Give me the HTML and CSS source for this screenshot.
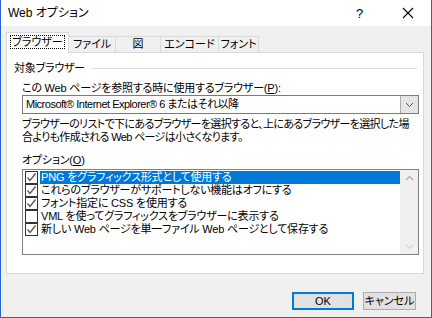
FILE: index.html
```html
<!DOCTYPE html>
<html lang="ja">
<head>
    <meta charset="UTF-8">
    <title>Web オプション</title>
    <link rel="stylesheet" href="styles.css">
</head>
<body>
    <div class="dialog">
        <div class="titlebar">
            <span class="title">Web オプション</span>
            <span class="help">?</span>
            <span class="close">
                <svg width="12" height="12" viewBox="0 0 12 12"><path d="M1 1 L11 11 M11 1 L1 11" stroke="#000" stroke-width="1.1" fill="none"/></svg>
            </span>
        </div>

        <div class="tabs">
            <div class="tab active"><span class="focus">ブラウザー</span></div>
            <div class="tab t2">ファイル</div>
            <div class="tab t3">図</div>
            <div class="tab t4">エンコード</div>
            <div class="tab t5">フォント</div>
        </div>

        <div class="panel">
            <div class="group-title">
                <span>対象ブラウザー</span>
                <div class="group-line"></div>
            </div>

            <div class="section">
                <div class="label">この Web ページを参照する時に使用するブラウザー(<u>P</u>):</div>
                <div class="combo">
                    <span class="combo-text">Microsoft® Internet Explorer® 6 またはそれ以降</span>
                    <span class="combo-btn">
                        <svg width="9" height="6" viewBox="0 0 9 6"><path d="M1 1 L4.5 4.5 L8 1" stroke="#555" stroke-width="1" fill="none"/></svg>
                    </span>
                </div>
                <div class="desc">
                    <div>ブラウザーのリストで下にあるブラウザーを選択すると、上にあるブラウザーを選択した場</div>
                    <div>合よりも作成される Web ページは小さくなります。</div>
                </div>

                <div class="label options-label">オプション(<u>O</u>)</div>
                <div class="listbox">
                    <div class="items">
                        <div class="item selected">
                            <span class="check on"></span>
                            <span class="item-text">PNG をグラフィックス形式として使用する</span>
                        </div>
                        <div class="item">
                            <span class="check on"></span>
                            <span class="item-text">これらのブラウザーがサポートしない機能はオフにする</span>
                        </div>
                        <div class="item">
                            <span class="check on"></span>
                            <span class="item-text">フォント指定に CSS を使用する</span>
                        </div>
                        <div class="item">
                            <span class="check"></span>
                            <span class="item-text">VML を使ってグラフィックスをブラウザーに表示する</span>
                        </div>
                        <div class="item">
                            <span class="check on"></span>
                            <span class="item-text">新しい Web ページを単一ファイル Web ページとして保存する</span>
                        </div>
                    </div>
                    <div class="scrollbar">
                        <svg width="9" height="6" viewBox="0 0 9 6"><path d="M1 5 L4.5 1.5 L8 5" stroke="#a8a8a8" stroke-width="1.2" fill="none"/></svg>
                        <svg width="9" height="6" viewBox="0 0 9 6"><path d="M1 1 L4.5 4.5 L8 1" stroke="#d4d4d4" stroke-width="1.2" fill="none"/></svg>
                    </div>
                </div>
            </div>
        </div>

        <div class="buttons">
            <button class="btn default">OK</button>
            <button class="btn">キャンセル</button>
        </div>
    </div>
</body>
</html>
```

FILE: styles.css
```css
* {
    box-sizing: border-box;
    margin: 0;
    padding: 0;
}

body {
    font-family: 'Liberation Sans', 'Noto Sans CJK JP', sans-serif;
    font-size: 12px;
    line-height: 13px;
    color: #000;
    background: #f0f0f0;
}

.dialog {
    width: 432px;
    height: 318px;
    background: #f0f0f0;
    border: 1px solid #2a64d0;
    border-top: none;
    overflow: hidden;
}

.titlebar {
    height: 26px;
    background: #fff;
    display: flex;
    align-items: center;
    padding-left: 7px;
}

.title {
    flex-grow: 1;
    font-size: 12px;
    font-feature-settings: "palt";
}

.help {
    width: 46px;
    font-size: 13px;
}

.close {
    width: 29px;
    display: flex;
}

.tabs {
    display: flex;
    align-items: flex-end;
    height: 20px;
    margin-top: 6px;
    padding-left: 5px;
}

.tab {
    height: 16px;
    border: 1px solid #d9d9d9;
    border-bottom: none;
    background: #f0f0f0;
    margin-left: -1px;
    display: flex;
    align-items: center;
    justify-content: center;
    font-feature-settings: "palt";
    font-size: 11px;
}

.tab.active {
    margin-left: 0;
    width: 63px;
    height: 21px;
    margin-bottom: -1px;
    background: #fff;
    position: relative;
    z-index: 1;
    padding-bottom: 2px;
}

.focus {
    border: 1px dotted #000;
    padding: 0 1px;
    line-height: 12px;
}

.t2 { width: 48px; }
.t3 { width: 46px; }
.t4 { width: 59px; }
.t5 { width: 41px; }

.panel {
    margin-left: 5px;
    width: 418px;
    height: 222px;
    background: #fff;
    border: 1px solid #d9d9d9;
    padding: 9px 4px 0 7px;
    font-feature-settings: "palt";
    font-size: 11px;
    letter-spacing: -0.2px;
}

.group-title {
    display: flex;
    align-items: center;
    gap: 6px;
    padding-right: 2px;
}

.group-line {
    flex-grow: 1;
    height: 1px;
    background: #dcdcdc;
}

.section {
    padding-left: 8px;
}

.label {
    margin-top: 7px;
}

.combo {
    height: 19px;
    border: 1px solid #7a7a7a;
    display: flex;
    align-items: center;
    justify-content: space-between;
    padding-left: 3px;
}

.combo-text {
    letter-spacing: -0.5px;
}

.combo-btn {
    width: 18px;
    height: 17px;
    background: #e5e5e5;
    border-left: 1px solid #acacac;
    display: flex;
    align-items: center;
    justify-content: center;
}

.desc {
    margin-top: 4px;
    white-space: nowrap;
    letter-spacing: -0.65px;
}

.options-label {
    margin-top: 10px;
}

.listbox {
    margin-top: 2px;
    height: 86px;
    border: 1px solid #828282;
    display: flex;
}

.items {
    flex-grow: 1;
    padding-top: 1px;
}

.item {
    height: 13px;
    display: flex;
    align-items: center;
    padding-left: 2px;
    white-space: nowrap;
}

.check {
    width: 13px;
    height: 13px;
    border: 1px solid #333;
    background: #fff;
    margin-right: 2px;
    flex-shrink: 0;
}

.check.on {
    background: #fff url("data:image/svg+xml,%3Csvg xmlns='http://www.w3.org/2000/svg' width='11' height='11'%3E%3Cpath d='M1.5 5.5 L4 8.5 L9.5 1.5' stroke='%23555' stroke-width='1.3' fill='none'/%3E%3C/svg%3E") no-repeat center;
}

.item-text {
    flex-grow: 1;
    padding-left: 1px;
    height: 13px;
}

.item.selected .item-text {
    background: #0078d7;
    color: #fff;
}

.scrollbar {
    width: 18px;
    background: #f0f0f0;
    display: flex;
    flex-direction: column;
    justify-content: space-between;
    align-items: center;
    padding: 5px 0 4px;
}

.buttons {
    display: flex;
    justify-content: flex-end;
    gap: 9px;
    margin-top: 18px;
    padding-right: 15px;
}

.btn {
    height: 18px;
    width: 53px;
    background: #e1e1e1;
    border: 1px solid #adadad;
    font-family: 'Liberation Sans', 'Noto Sans CJK JP', sans-serif;
    font-size: 11px;
    font-feature-settings: "palt";
    line-height: 14px;
}

.btn.default {
    width: 62px;
    border: 2px solid #0078d7;
}
```
